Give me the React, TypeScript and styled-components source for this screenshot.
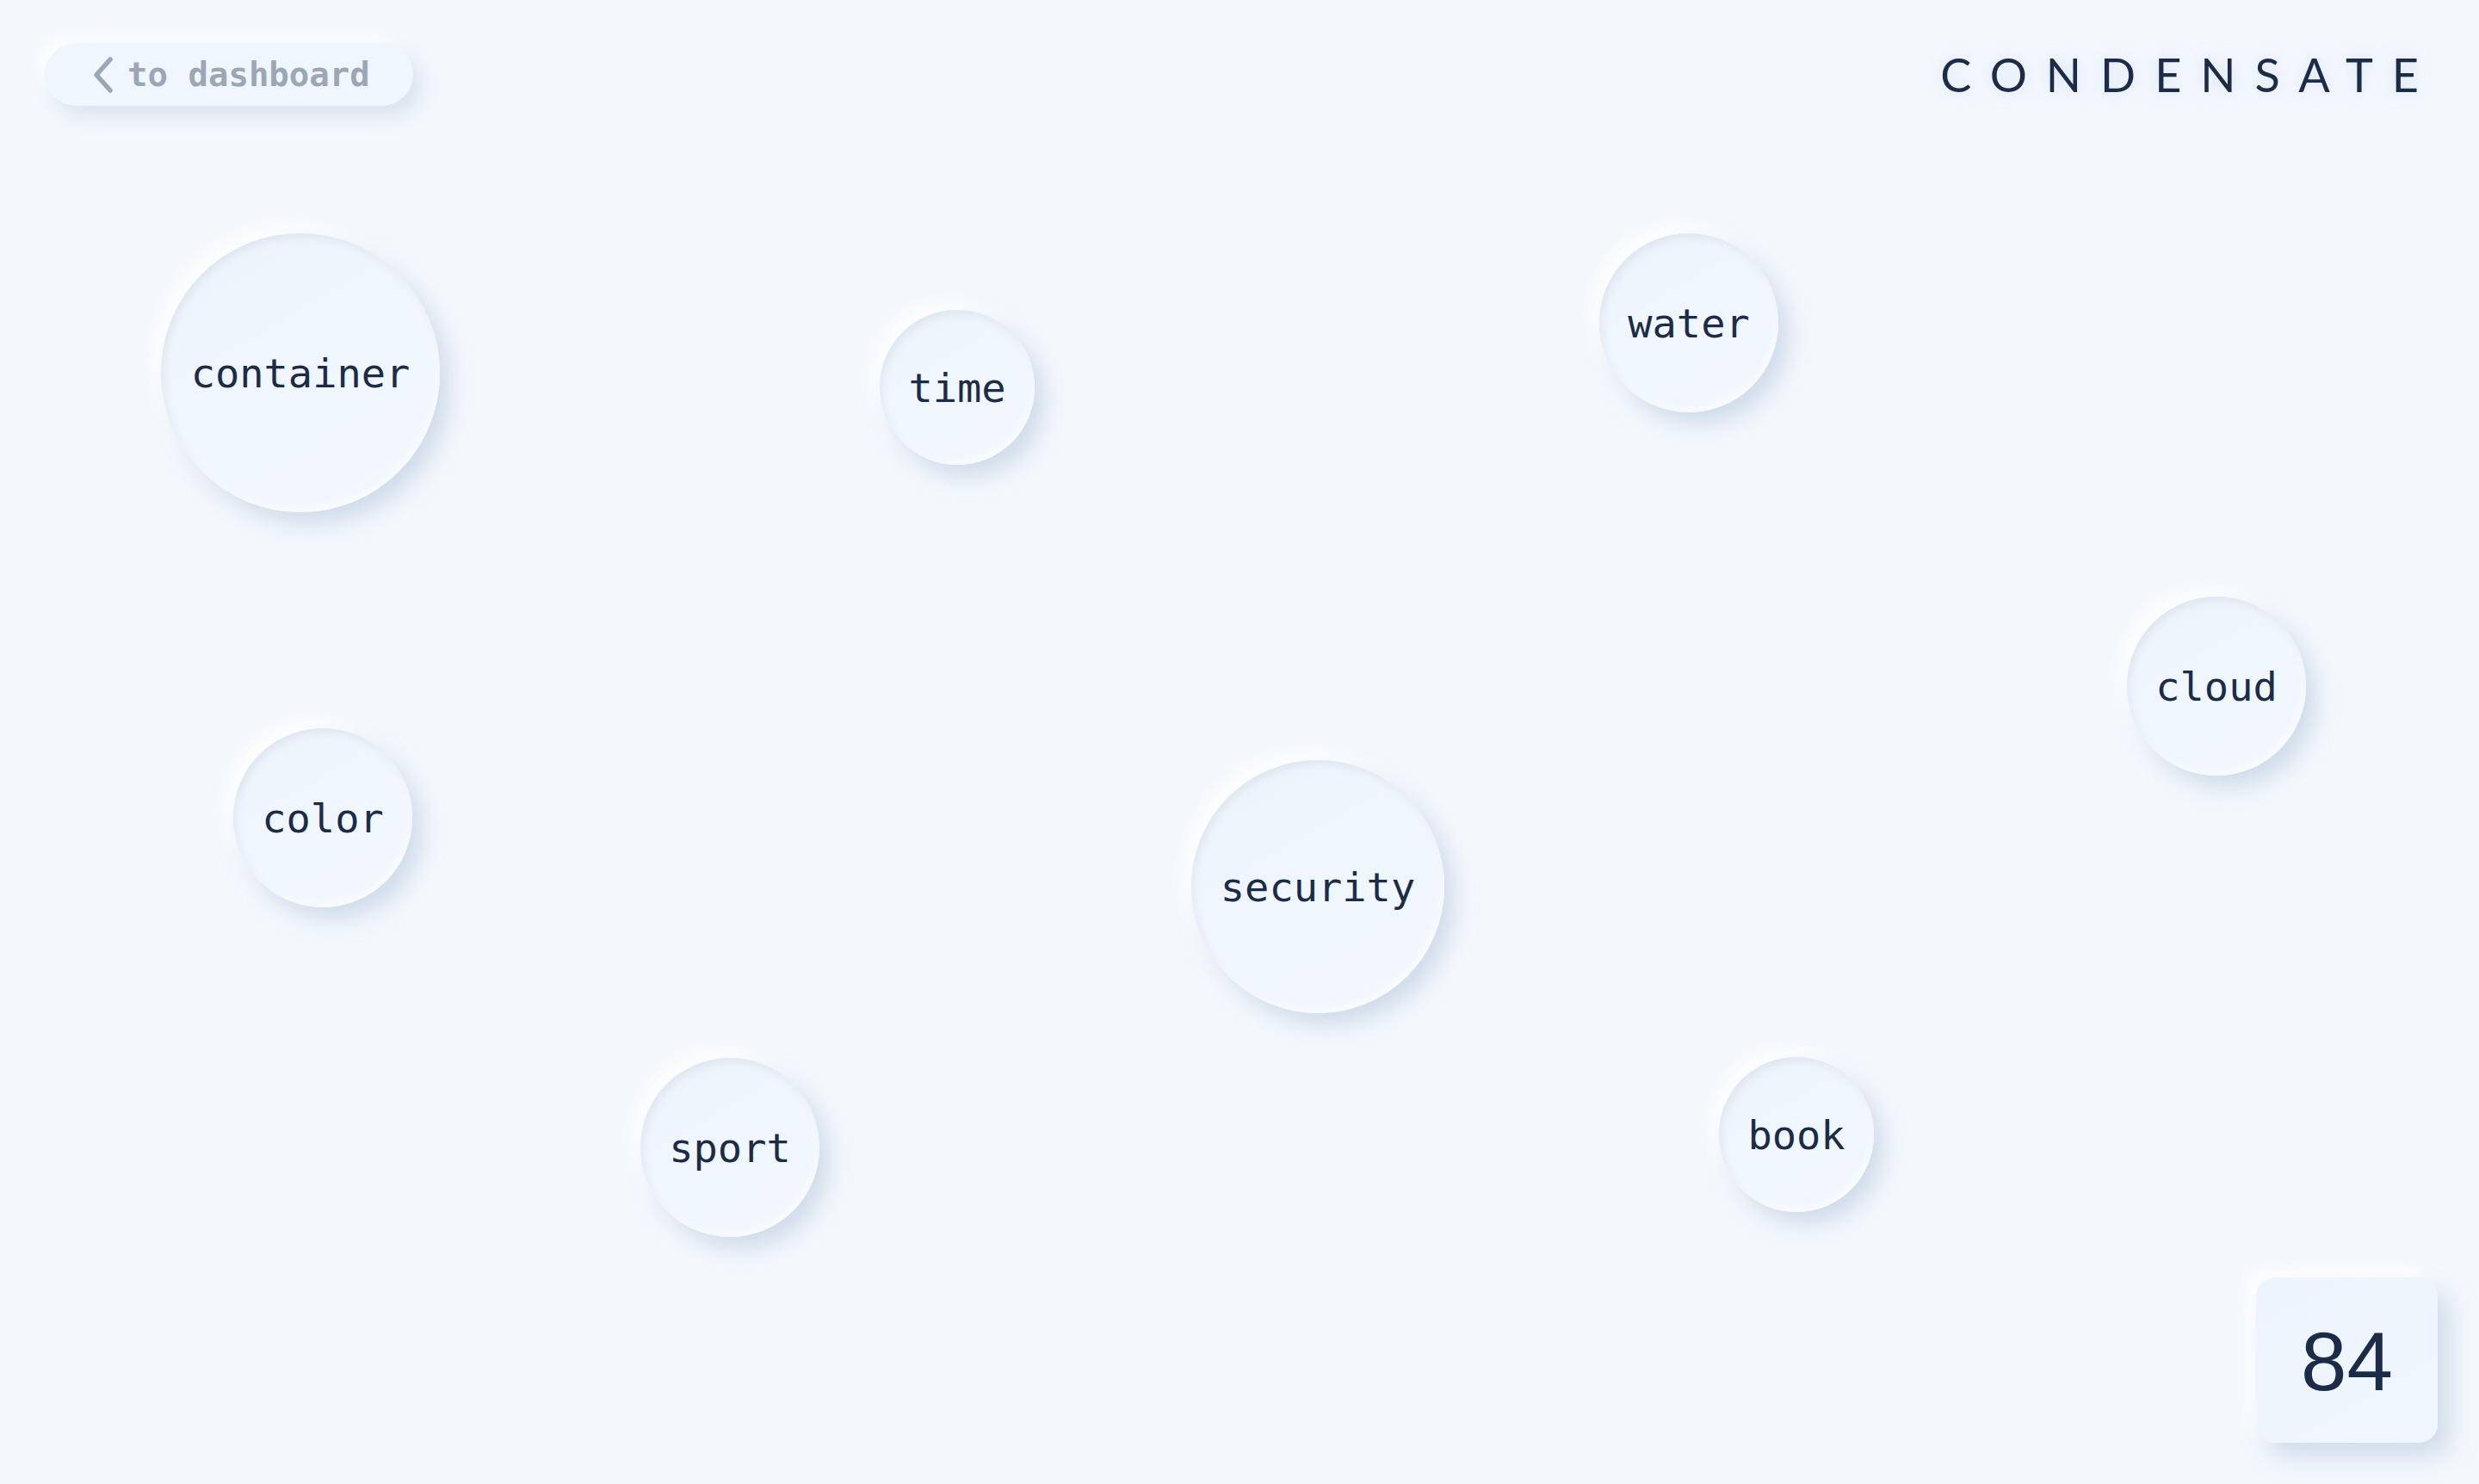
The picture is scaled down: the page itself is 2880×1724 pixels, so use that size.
import React from 'react'
import styled, { createGlobalStyle } from 'styled-components'

/**
 * Words floating on the canvas: centre point and diameter, in page pixels
 */
type Drop = {
  word: string
  x: number
  y: number
  size: number
}

const drops: Drop[] = [
  { word: 'container', x: 349, y: 433, size: 324 },
  { word: 'time', x: 1112, y: 450, size: 180 },
  { word: 'water', x: 1962, y: 375, size: 208 },
  { word: 'cloud', x: 2575, y: 797, size: 208 },
  { word: 'color', x: 375, y: 950, size: 208 },
  { word: 'security', x: 1531, y: 1030, size: 294 },
  { word: 'sport', x: 848, y: 1333, size: 208 },
  { word: 'book', x: 2087, y: 1318, size: 180 },
]

const GlobalStyle = createGlobalStyle`
  html, body {
    margin: 0;
    padding: 0;
    background: #f3f8fd;
  }
  * {
    box-sizing: border-box;
  }
`

const Page = styled.div`
  position: relative;
  width: 100%;
  height: 100vh;
  overflow: hidden;
  display: flex;
  flex-direction: column;
  justify-content: space-between;
  background: #f3f8fd;
  color: #1b2c48;
`

const Header = styled.header`
  position: relative;
  z-index: 2;
  display: flex;
  align-items: center;
  justify-content: space-between;
  padding: 50px 48px 0 52px;
`

const BackButton = styled.button`
  display: inline-flex;
  align-items: center;
  gap: 15px;
  height: 73px;
  padding: 0 50px 0 55px;
  border: none;
  border-radius: 40px;
  background: #f0f6fd;
  box-shadow:
    10px 12px 22px rgba(186, 201, 222, 0.45),
    -8px -8px 16px rgba(255, 255, 255, 0.9);
  color: #9ca7b6;
  font-family: 'DejaVu Sans Mono', monospace;
  font-weight: 700;
  font-size: 39px;
  cursor: pointer;

  svg {
    width: 26px;
    height: 42px;
  }
`

const Logo = styled.h1`
  margin: 0;
  font-family: Lato, 'Noto Sans', sans-serif;
  font-weight: 400;
  font-size: 54px;
  letter-spacing: 22px;
  color: #1b2c48;
  text-shadow: 0 0 18px rgba(190, 205, 225, 0.6);
`

const Canvas = styled.main`
  position: absolute;
  inset: 0;
  z-index: 1;
`

const Bubble = styled.div<{ $size: number }>`
  position: absolute;
  width: ${({ $size }) => $size}px;
  height: ${({ $size }) => $size}px;
  border-radius: 50%;
  display: flex;
  align-items: center;
  justify-content: center;
  background: linear-gradient(150deg, #edf3fa 0%, #f0f6fd 45%, #f2f8fe 100%);
  box-shadow:
    12px 14px 26px rgba(180, 196, 218, 0.55),
    -10px -10px 20px rgba(255, 255, 255, 0.95),
    inset 3px 5px 8px rgba(205, 216, 230, 0.45),
    inset -3px -4px 8px rgba(255, 255, 255, 0.7);
  font-family: 'DejaVu Sans Mono', monospace;
  font-size: 47px;
  color: #1b2c48;
`

const Footer = styled.footer`
  position: relative;
  z-index: 2;
  display: flex;
  justify-content: flex-end;
  padding: 0 48px 48px 0;
`

const Counter = styled.div`
  width: 211px;
  height: 192px;
  border-radius: 22px;
  display: flex;
  align-items: center;
  justify-content: center;
  padding-top: 4px;
  background: linear-gradient(150deg, #edf4fd 0%, #f0f6fd 100%);
  box-shadow:
    14px 16px 28px rgba(180, 196, 218, 0.55),
    -10px -10px 20px rgba(255, 255, 255, 0.95);
  font-family: 'Liberation Sans', Arial, sans-serif;
  font-size: 96px;
  color: #1b2c48;
`

const Chevron = () => (
  <svg viewBox="0 0 26 42" fill="none">
    <path
      d="M21 3 L5 21 L21 39"
      stroke="currentColor"
      strokeWidth="5.5"
      strokeLinecap="round"
      strokeLinejoin="round"
    />
  </svg>
)

export default function App() {
  return (
    <Page>
      <GlobalStyle />
      <Header>
        <BackButton>
          <Chevron />
          to dashboard
        </BackButton>
        <Logo>CONDENSATE</Logo>
      </Header>
      <Canvas>
        {drops.map(d => (
          <Bubble
            key={d.word}
            $size={d.size}
            style={{ left: d.x - d.size / 2, top: d.y - d.size / 2 }}
          >
            {d.word}
          </Bubble>
        ))}
      </Canvas>
      <Footer>
        <Counter>84</Counter>
      </Footer>
    </Page>
  )
}
